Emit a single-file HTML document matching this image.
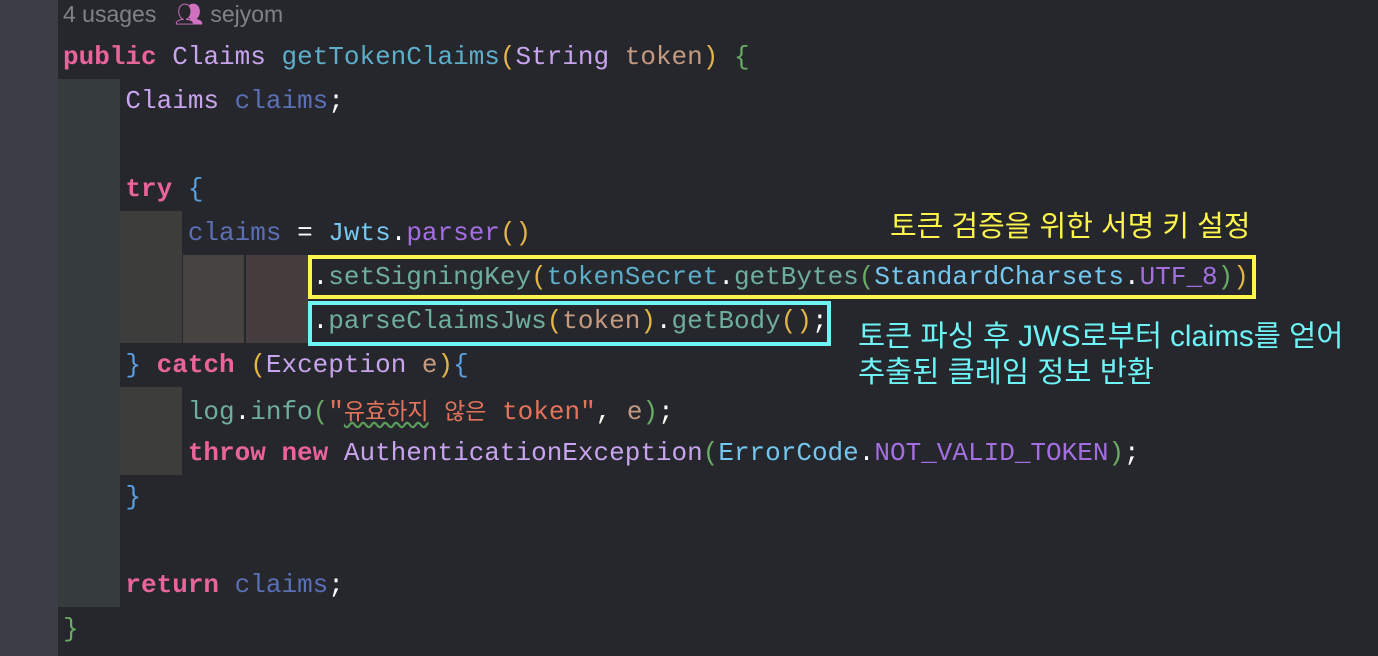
<!DOCTYPE html>
<html><head><meta charset="utf-8"><style>
body{margin:0;width:1378px;height:656px;background:#26272c;overflow:hidden;position:relative;font-family:"Liberation Mono",monospace}
.g{position:absolute;left:0;top:0;width:58px;height:656px;background:#3b3e44}
.b{position:absolute}
.l{position:absolute;left:63px;font-size:26px;line-height:44px;height:44px;white-space:pre;color:#d8d8d8}
.k{color:#e8649a;font-weight:bold}.c{color:#c8a4ee}.m{color:#5eaec9}.p{color:#c49a80}.v{color:#5a6fb5}.j{color:#74c7ef}.pm{color:#a36fe0}.mc{color:#6fae9c}.y{color:#e2b54a}.gr{color:#6aaa64}.bl{color:#5aa0e0}.s{color:#e4735c}.w{color:#fff}
.h{font-family:"Noto Sans CJK KR",sans-serif;font-size:23px;font-weight:normal}
.ann{position:absolute;font-family:"Liberation Sans","Noto Sans CJK KR",sans-serif;white-space:pre}
</style></head><body>
<div class="g"></div>
<div class="b" style="left:58px;top:79px;width:62px;height:528px;background:#363c3b"></div>
<div class="b" style="left:120px;top:211px;width:62px;height:132px;background:#3d3d3b"></div>
<div class="b" style="left:120px;top:387px;width:62px;height:88px;background:#3d3d3b"></div>
<div class="b" style="left:183px;top:255px;width:61px;height:88px;background:#454441"></div>
<div class="b" style="left:246px;top:255px;width:62px;height:88px;background:#463d3f"></div>
<div style="position:absolute;left:63px;top:0;height:28px;line-height:28px;font-family:'Liberation Sans',sans-serif;font-size:23px;color:#80828a">4 usages <span style="color:#d070c0;margin-left:12px">&#x1F465;&#xFE0E;</span> sejyom</div>
<div class="l" style="top:35px"><span class="k">public</span> <span class="c">Claims</span> <span class="m">getTokenClaims</span><span class="y">(</span><span class="c">String</span> <span class="p">token</span><span class="y">)</span> <span class="gr">{</span></div>
<div class="l" style="top:79px">    <span class="c">Claims</span> <span class="v">claims</span><span class="w">;</span></div>
<div class="l" style="top:167px">    <span class="k">try</span> <span class="bl">{</span></div>
<div class="l" style="top:211px">        <span class="v">claims</span> <span class="w">=</span> <span class="j">Jwts</span><span class="w">.</span><span class="pm">parser</span><span class="y">()</span></div>
<div class="l" style="top:255px">                <span class="w">.</span><span class="mc">setSigningKey</span><span class="y">(</span><span class="m">tokenSecret</span><span class="w">.</span><span class="mc">getBytes</span><span class="gr">(</span><span class="j">StandardCharsets</span><span class="w">.</span><span class="pm">UTF_8</span><span class="gr">)</span><span class="y">)</span></div>
<div class="l" style="top:299px">                <span class="w">.</span><span class="mc">parseClaimsJws</span><span class="y">(</span><span class="p">token</span><span class="y">)</span><span class="w">.</span><span class="mc">getBody</span><span class="y">()</span><span class="w">;</span></div>
<div class="l" style="top:343px">    <span class="bl">}</span> <span class="k">catch</span> <span class="y">(</span><span class="c">Exception</span> <span class="p">e</span><span class="y">)</span><span class="bl">{</span></div>
<div class="l" style="top:387px">        <span class="mc">log</span><span class="w">.</span><span class="mc">info</span><span class="gr">(</span><span class="s">"<span class="h" style="text-decoration:underline wavy #5a9a5a">유효하지</span> <span class="h">않은</span> token"</span><span class="w">,</span> <span class="p">e</span><span class="gr">)</span><span class="w">;</span></div>
<div class="l" style="top:431px">        <span class="k">throw</span> <span class="k">new</span> <span class="c">AuthenticationException</span><span class="gr">(</span><span class="j">ErrorCode</span><span class="w">.</span><span class="pm">NOT_VALID_TOKEN</span><span class="gr">)</span><span class="w">;</span></div>
<div class="l" style="top:475px">    <span class="bl">}</span></div>
<div class="l" style="top:563px">    <span class="k">return</span> <span class="v">claims</span><span class="w">;</span></div>
<div class="l" style="top:607px"><span class="gr">}</span></div>
<div class="b" style="left:308px;top:255px;width:940px;height:36px;border:4px solid #fdf54a"></div>
<div class="b" style="left:308px;top:301px;width:515px;height:37px;border:4px solid #6ef4f6"></div>
<div class="ann" style="left:890px;top:203px;font-size:29px;color:#fdf54a">토큰 검증을 위한 서명 키 설정</div>
<div class="ann" style="left:858px;top:313px;font-size:29.5px;color:#6ef4f6">토큰 파싱 후 JWS로부터 claims를 얻어</div>
<div class="ann" style="left:858px;top:349px;font-size:29.5px;color:#6ef4f6">추출된 클레임 정보 반환</div>
</body></html>
